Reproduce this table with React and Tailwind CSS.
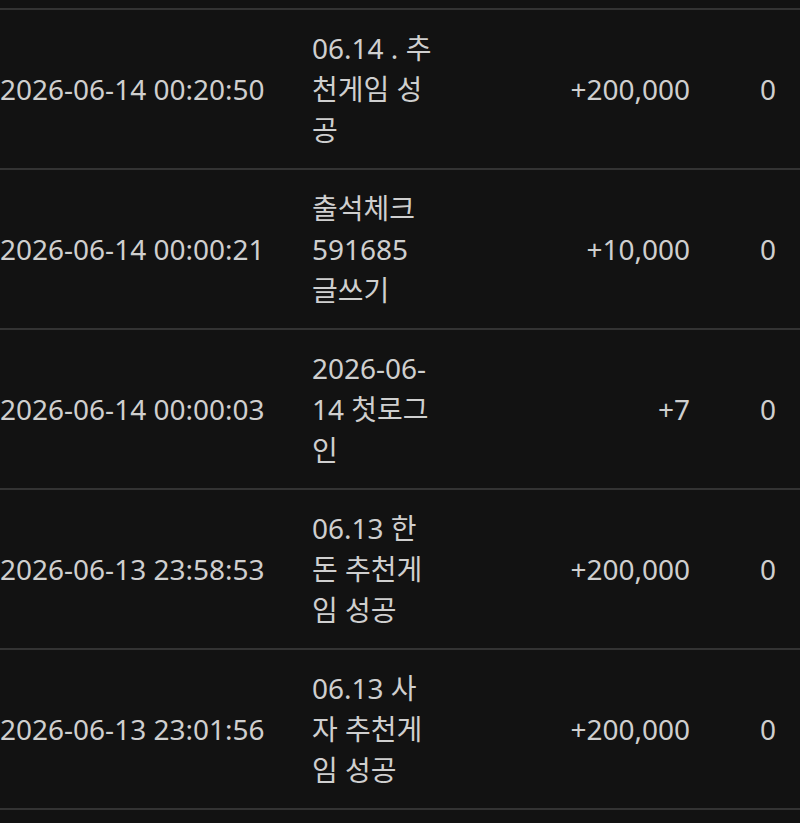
const rows = [
  { date: '2026-06-14 00:20:50', desc: '06.14 . 추천게임 성공', amount: '+200,000', balance: '0' },
  { date: '2026-06-14 00:00:21', desc: '출석체크 591685 글쓰기', amount: '+10,000', balance: '0' },
  { date: '2026-06-14 00:00:03', desc: '2026-06-14 첫로그인', amount: '+7', balance: '0' },
  { date: '2026-06-13 23:58:53', desc: '06.13 한돈 추천게임 성공', amount: '+200,000', balance: '0' },
  { date: '2026-06-13 23:01:56', desc: '06.13 사자 추천게임 성공', amount: '+200,000', balance: '0' },
];

// let hangul wrap between syllables, keep digits together
const wrapHangul = (s) => s.replace(/([\uAC00-\uD7A3])(?=[\uAC00-\uD7A3])/g, '$1\u200B');

// ─── PointHistory ──────────────────────────────────────────────────────────
export default function App() {
  return (
    <div
      className="min-h-[823px] w-[800px] overflow-hidden bg-[#121212] text-[28px] leading-[41px] text-[#cfcfcf]"
      style={{ fontFamily: '"Noto Sans", "Noto Sans CJK KR", sans-serif' }}
    >
      {/* tail of previous row */}
      <div className="h-[10px] border-b-2 border-[#333333]" />

      {rows.map((r, i) => (
        <div key={i} className="flex h-[160px] items-center border-b-2 border-[#333333]">
          <div className="w-[312px] shrink-0 whitespace-nowrap">{r.date}</div>
          <div className="w-[126px] shrink-0">{wrapHangul(r.desc)}</div>
          <div className="flex-1 text-right">{r.amount}</div>
          <div className="w-[110px] shrink-0 pr-[24px] text-right">{r.balance}</div>
        </div>
      ))}
    </div>
  );
}
